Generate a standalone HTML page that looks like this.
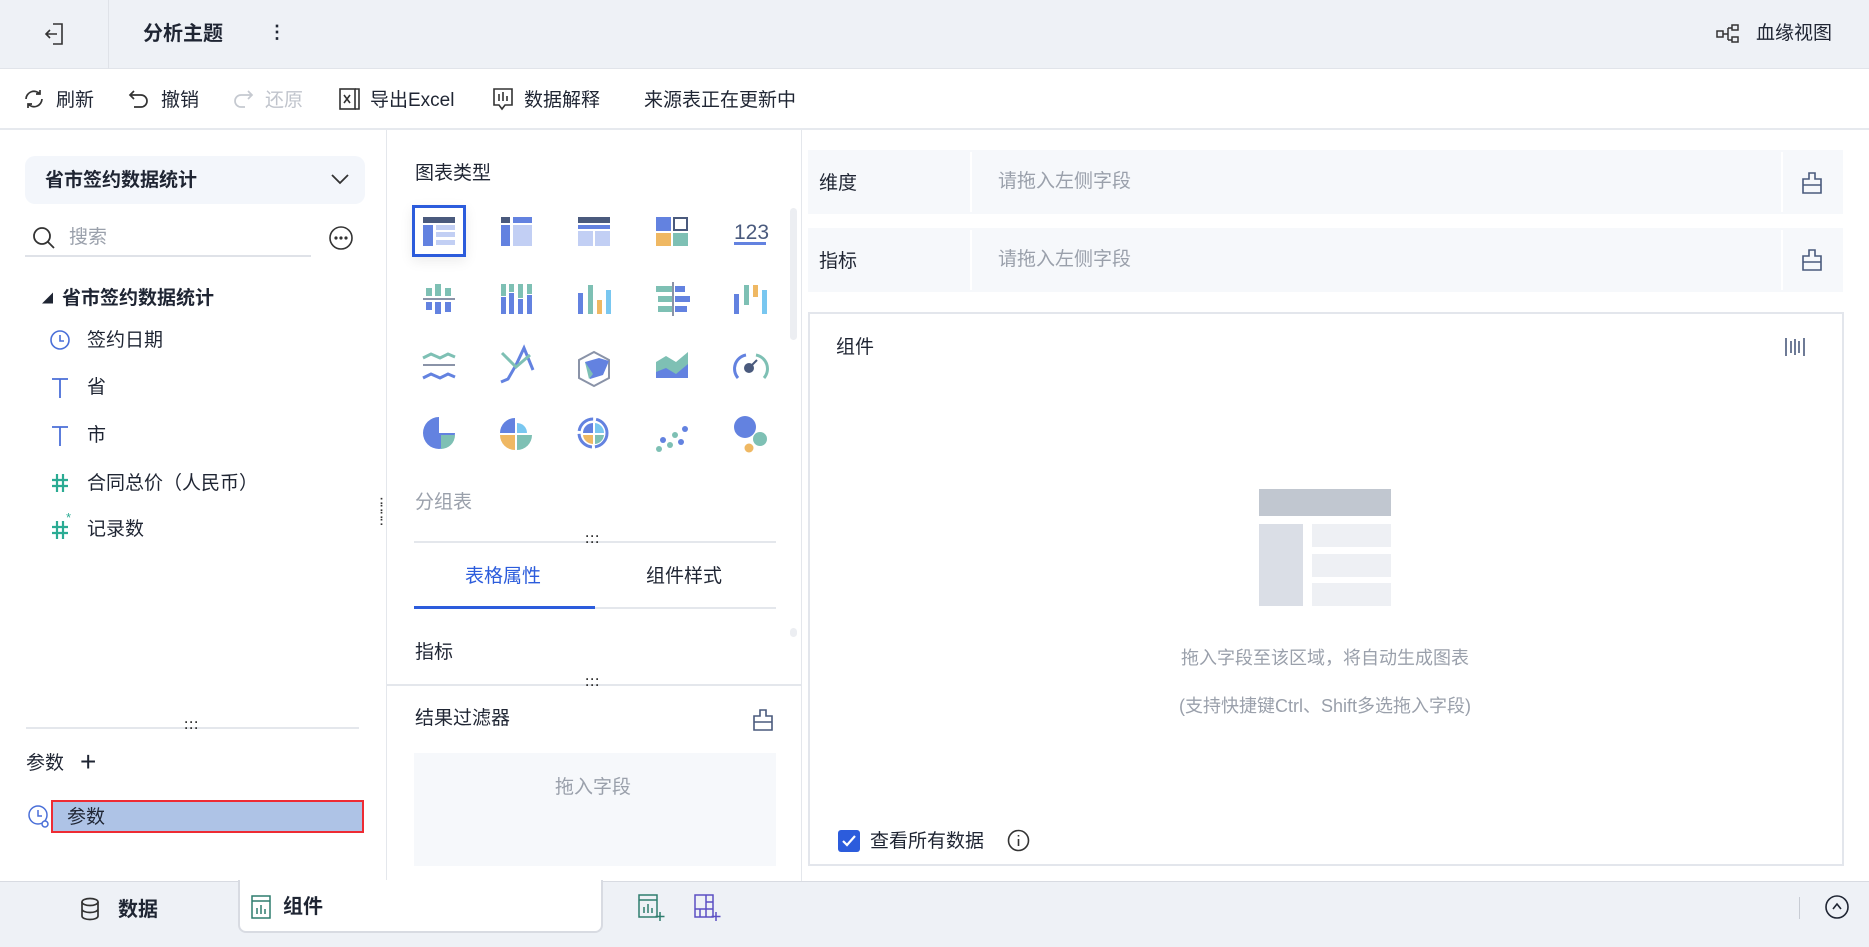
<!DOCTYPE html>
<html><head><meta charset="utf-8">
<style>
*{box-sizing:border-box;margin:0;padding:0}
body{width:1869px;height:947px;overflow:hidden;background:#fff;font-family:"Liberation Sans","Noto Sans CJK SC",sans-serif;color:#1f2533;position:relative}
.a{position:absolute;white-space:nowrap}
.t{font-size:19px;line-height:24px}
svg{position:absolute;overflow:visible}
.dots{position:absolute;width:20px;font-size:12px;line-height:6px;color:#333;text-align:center;letter-spacing:1px;font-weight:bold}
</style></head><body>
<!-- top bar -->
<div class="a" style="left:0;top:0;width:1869px;height:69px;background:#eef1f6;border-bottom:1px solid #e1e4ea"></div>
<div class="a" style="left:108px;top:0;width:1px;height:69px;background:#dfe2e8"></div>
<svg style="left:44px;top:22px" width="22" height="24" viewBox="0 0 22 24" fill="none" stroke="#333" stroke-width="1.6"><path d="M9 2h9v20H9M13 12H2M6 8l-4 4 4 4"/></svg>
<div class="a" style="left:143px;top:21px;font-size:20px;font-weight:bold;line-height:26px">分析主题</div>
<div class="a" style="left:268px;top:22px;font-size:18px;font-weight:bold">⋮</div>
<svg style="left:1716px;top:24px" width="24" height="20" viewBox="0 0 24 20" fill="none" stroke="#333" stroke-width="1.5"><rect x="1" y="7" width="6" height="6"/><rect x="16" y="1" width="6" height="5"/><rect x="16" y="13" width="6" height="5"/><path d="M7 10h5M12 4v12M12 4h4M12 16h4"/></svg>
<div class="a t" style="left:1756px;top:22px">血缘视图</div>
<!-- toolbar -->
<div class="a" style="left:0;top:128px;width:1869px;height:2px;background:#e6e9ee"></div>
<svg style="left:23px;top:88px" width="22" height="22" viewBox="0 0 22 22" fill="none" stroke="#333" stroke-width="1.7"><path d="M3 11a8 8 0 0 1 14-5M19 11a8 8 0 0 1-14 5M17 2v4h-4M5 20v-4h4"/></svg>
<div class="a t" style="left:56px;top:89px">刷新</div>
<svg style="left:128px;top:88px" width="22" height="22" viewBox="0 0 22 22" fill="none" stroke="#333" stroke-width="1.7"><path d="M6 3L2 7l4 4M2 7h11a6 6 0 0 1 0 12H6"/></svg>
<div class="a t" style="left:161px;top:89px">撤销</div>
<svg style="left:232px;top:88px" width="22" height="22" viewBox="0 0 22 22" fill="none" stroke="#c5c9d0" stroke-width="1.7"><path d="M16 3l4 4-4 4M20 7H9a6 6 0 0 0 0 12h4"/></svg>
<div class="a t" style="left:265px;top:89px;color:#c0c4cc">还原</div>
<svg style="left:339px;top:87px" width="22" height="24" viewBox="0 0 22 24" fill="none" stroke="#333" stroke-width="1.6"><rect x="1" y="2" width="15" height="20"/><path d="M16 2h4v20h-4M5 8l6 8M11 8l-6 8"/></svg>
<div class="a t" style="left:370px;top:89px">导出Excel</div>
<svg style="left:492px;top:87px" width="22" height="24" viewBox="0 0 22 24" fill="none" stroke="#333" stroke-width="1.6"><path d="M2 2h18v16h-7l-3 4-3-4H2z M7 7v7M11 5v9M15 9v5"/></svg>
<div class="a t" style="left:524px;top:89px">数据解释</div>
<div class="a t" style="left:644px;top:89px">来源表正在更新中</div>
<!-- left panel -->
<div class="a" style="left:386px;top:130px;width:1px;height:752px;background:#e4e7ec"></div>
<div class="a" style="left:25px;top:156px;width:340px;height:48px;background:#f3f6fb;border-radius:10px"></div>
<div class="a" style="left:45px;top:169px;font-size:19px;font-weight:bold;line-height:24px">省市签约数据统计</div>
<svg style="left:331px;top:174px" width="18" height="10" viewBox="0 0 18 10" fill="none" stroke="#333" stroke-width="1.8"><path d="M1 1l8 8 8-8"/></svg>
<svg style="left:32px;top:226px" width="24" height="24" viewBox="0 0 24 24" fill="none" stroke="#333" stroke-width="1.8"><circle cx="10" cy="10" r="8"/><path d="M16 16l6 6"/></svg>
<div class="a t" style="left:69px;top:226px;color:#9aa0ab">搜索</div>
<div class="a" style="left:25px;top:255px;width:286px;height:2px;background:#dfe2e8"></div>
<svg style="left:329px;top:226px" width="24" height="24" viewBox="0 0 24 24" fill="none" stroke="#333" stroke-width="1.6"><circle cx="12" cy="12" r="11"/><circle cx="7" cy="12" r=".8" fill="#333"/><circle cx="12" cy="12" r=".8" fill="#333"/><circle cx="17" cy="12" r=".8" fill="#333"/></svg>
<div class="a" style="left:42px;top:290px;font-size:11px">◢</div>
<div class="a" style="left:62px;top:287px;font-size:19px;font-weight:bold;line-height:24px">省市签约数据统计</div>
<svg style="left:50px;top:330px" width="20" height="20" viewBox="0 0 20 20" fill="none" stroke="#4a6fd8" stroke-width="1.6"><circle cx="10" cy="10" r="9"/><path d="M10 5v6h4"/></svg>
<div class="a t" style="left:87px;top:329px">签约日期</div>
<svg style="left:51px;top:378px" width="18" height="20" viewBox="0 0 18 20" fill="none" stroke="#4a6fd8" stroke-width="1.8"><path d="M1 1h16M9 1v19"/></svg>
<div class="a t" style="left:87px;top:376px">省</div>
<svg style="left:51px;top:426px" width="18" height="20" viewBox="0 0 18 20" fill="none" stroke="#4a6fd8" stroke-width="1.8"><path d="M1 1h16M9 1v19"/></svg>
<div class="a t" style="left:87px;top:424px">市</div>
<svg style="left:51px;top:473px" width="18" height="20" viewBox="0 0 18 20" fill="none" stroke="#2bab93" stroke-width="2.2"><path d="M6 1v18M12 1v18M1 7h16M1 13h16"/></svg>
<div class="a t" style="left:87px;top:472px">合同总价（人民币）</div>
<svg style="left:51px;top:520px" width="18" height="20" viewBox="0 0 18 20" fill="none" stroke="#2bab93" stroke-width="2.2"><path d="M6 1v18M12 1v18M1 7h16M1 13h16"/></svg>
<div class="a" style="left:66px;top:510px;font-size:13px;color:#2bab93">*</div>
<div class="a t" style="left:87px;top:518px">记录数</div>
<div class="a" style="left:26px;top:727px;width:333px;height:2px;background:#e4e7ec"></div>
<div class="dots" style="left:182px;top:719px">···<br>···</div>
<div class="a t" style="left:26px;top:752px">参数</div>
<div class="a" style="left:80px;top:746px;font-size:28px;font-weight:300;line-height:32px">+</div>
<svg style="left:28px;top:805px" width="22" height="24" viewBox="0 0 22 24" fill="none" stroke="#4a6fd8" stroke-width="1.5"><circle cx="10" cy="10" r="9"/><path d="M10 5v6h4"/><circle cx="17" cy="19" r="3" fill="#fff"/></svg>
<div class="a" style="left:51px;top:800px;width:313px;height:33px;border:2px solid #ee2b33;background:#aec3e6"></div>
<div class="a t" style="left:67px;top:806px">参数</div>
<!-- middle panel -->
<div class="a" style="left:801px;top:130px;width:1px;height:752px;background:#e4e7ec"></div>
<div class="a t" style="left:415px;top:162px">图表类型</div>
<div class="a" style="left:412px;top:205px;width:54px;height:52px;border:3px solid #2c5cdc;box-shadow:0 4px 12px rgba(0,0,0,.08)"></div>
<svg style="left:390px;top:190px" width="420" height="280" viewBox="390 190 420 280">
<g>
<rect x="423" y="217" width="32" height="6" fill="#4a5a7d"/><rect x="423" y="225" width="10" height="21" fill="#6382e0"/><rect x="436" y="225" width="19" height="5" fill="#c2cff4"/><rect x="436" y="232" width="19" height="5" fill="#c2cff4"/><rect x="436" y="240" width="19" height="5" fill="#c2cff4"/>
<rect x="501" y="217" width="9" height="6" fill="#4a5a7d"/><rect x="513" y="217" width="19" height="6" fill="#6382e0"/><rect x="501" y="225" width="9" height="21" fill="#6382e0"/><rect x="513" y="225" width="19" height="21" fill="#c2cff4"/>
<rect x="578" y="217" width="32" height="6" fill="#4a5a7d"/><rect x="578" y="225" width="32" height="4" fill="#6382e0"/><rect x="578" y="231" width="15" height="15" fill="#c2cff4"/><rect x="595" y="231" width="15" height="15" fill="#c2cff4"/>
<rect x="656" y="217" width="15" height="14" fill="#6382e0"/><rect x="674" y="218" width="13" height="12" fill="none" stroke="#4a5a7d" stroke-width="2"/><rect x="656" y="233" width="15" height="13" fill="#efb863"/><rect x="673" y="233" width="15" height="13" fill="#7ec0b4"/>
<text x="734" y="239" font-size="21" fill="#4a5a7d" font-family="Liberation Sans">123</text><rect x="734" y="242" width="32" height="3" fill="#6382e0"/>
</g>
<g>
<rect x="426" y="288" width="6" height="8" fill="#7ec0b4"/><rect x="435" y="284" width="6" height="12" fill="#7ec0b4"/><rect x="445" y="288" width="6" height="8" fill="#7ec0b4"/><rect x="423" y="298" width="32" height="2" fill="#8a93a8"/><rect x="426" y="302" width="6" height="8" fill="#6382e0"/><rect x="435" y="302" width="6" height="12" fill="#6382e0"/><rect x="445" y="302" width="6" height="10" fill="#6382e0"/>
<rect x="501" y="284" width="5" height="12" fill="#7ec0b4"/><rect x="501" y="297" width="5" height="17" fill="#6382e0"/><rect x="509" y="284" width="5" height="8" fill="#7ec0b4"/><rect x="509" y="293" width="5" height="21" fill="#6382e0"/><rect x="518" y="284" width="5" height="14" fill="#7ec0b4"/><rect x="518" y="299" width="5" height="15" fill="#6382e0"/><rect x="527" y="284" width="5" height="10" fill="#7ec0b4"/><rect x="527" y="295" width="5" height="19" fill="#6382e0"/>
<rect x="578" y="293" width="5" height="21" fill="#6382e0"/><rect x="588" y="285" width="5" height="29" fill="#7ec0b4"/><rect x="597" y="300" width="5" height="14" fill="#efb863"/><rect x="606" y="290" width="5" height="24" fill="#79c7f0"/>
<rect x="656" y="286" width="16" height="6" fill="#7ec0b4"/><rect x="675" y="286" width="10" height="6" fill="#6382e0"/><rect x="658" y="296" width="14" height="6" fill="#7ec0b4"/><rect x="675" y="296" width="15" height="6" fill="#6382e0"/><rect x="658" y="306" width="14" height="6" fill="#7ec0b4"/><rect x="675" y="306" width="12" height="6" fill="#6382e0"/><rect x="672" y="282" width="2" height="34" fill="#8a93a8"/>
<rect x="734" y="294" width="5" height="20" fill="#6382e0"/><rect x="744" y="285" width="5" height="20" fill="#7ec0b4"/><rect x="753" y="285" width="5" height="12" fill="#efb863"/><rect x="762" y="290" width="5" height="24" fill="#79c7f0"/>
</g>
<g fill="none" stroke-width="3">
<path d="M423 358l8-4 9 4 8-4 7 3" stroke="#7ec0b4"/><path d="M423 365h32" stroke="#8a93a8" stroke-width="2"/><path d="M423 378l8-4 9 4 8-4 7 3" stroke="#6382e0"/>
<path d="M501 382l7-3 8-14 8-17 9 22" stroke="#6382e0"/><path d="M502 353l14 14 14-12" stroke="#7ec0b4"/>
<path d="M594 352l15 8v18l-15 8-15-8v-18z" stroke="#8a93a8" stroke-width="2"/><path d="M585 362l14-4 10 3-6 14-13 4z" fill="#6382e0" stroke="none"/><path d="M585 362l8 12-4 5z" fill="#7ec0b4" stroke="none"/>
<path d="M656 362l10-6 10 6 12-10v26h-32z" fill="#7ec0b4" stroke="none"/><path d="M656 372l10-4 10 6 12-10v14h-32z" fill="#6382e0" stroke="none"/>
<path d="M738 378a14 14 0 0 1 8-23" stroke="#6382e0"/><path d="M756 355a14 14 0 0 1 8 23" stroke="#7ec0b4"/><circle cx="749" cy="368" r="5" fill="#4a5a7d" stroke="none"/><path d="M749 368l8-8" stroke="#4a5a7d" stroke-width="2"/>
</g>
<g transform="translate(0,-7)">
<path d="M455 440a16 16 0 1 1-16-16v16z" fill="#6382e0"/><path d="M441 442h14a14 14 0 0 1-14 14z" fill="#7ec0b4"/>
<path d="M515 425a15 15 0 0 0-15 15h15z" fill="#6382e0"/><path d="M517 430v10h10a10 10 0 0 0-10-10z" fill="#79c7f0"/><path d="M500 442a15 15 0 0 0 15 15v-15z" fill="#efb863"/><path d="M517 442v15a15 15 0 0 0 15-15z" fill="#7ec0b4"/>
<circle cx="593" cy="440" r="14" fill="none" stroke="#6382e0" stroke-width="3" stroke-dasharray="20 3"/><path d="M593 430a10 10 0 0 0-10 10h10z" fill="#6382e0"/><path d="M595 430v10h9a10 10 0 0 0-9-10z" fill="#79c7f0"/><path d="M583 442a10 10 0 0 0 10 9v-9z" fill="#efb863"/><path d="M595 442v9a10 10 0 0 0 9-9z" fill="#7ec0b4"/>
<circle cx="663" cy="447" r="3" fill="#6382e0"/><circle cx="675" cy="442" r="3" fill="#7ec0b4"/><circle cx="685" cy="436" r="3" fill="#6382e0"/><circle cx="659" cy="456" r="3" fill="#7ec0b4"/><circle cx="670" cy="452" r="3" fill="#7ec0b4"/><circle cx="681" cy="449" r="3" fill="#6382e0"/>
<circle cx="745" cy="434" r="11" fill="#6382e0"/><circle cx="760" cy="446" r="7" fill="#7ec0b4"/><circle cx="749" cy="455" r="4.5" fill="#efb863"/>
</g>
</svg>
<div class="a" style="left:790px;top:208px;width:7px;height:132px;background:#eceef2;border-radius:4px"></div>
<div class="a" style="left:790px;top:628px;width:7px;height:9px;background:#eceef2;border-radius:4px"></div>
<div class="dots" style="left:376px;top:497px;width:12px;line-height:7px;font-size:12px">: :<br>: :</div>
<div class="a t" style="left:415px;top:491px;color:#9aa0ab">分组表</div>
<div class="a" style="left:414px;top:541px;width:362px;height:2px;background:#e4e7ec"></div>
<div class="dots" style="left:583px;top:533px">···<br>···</div>
<div class="a t" style="left:465px;top:565px;color:#2c5cdc">表格属性</div>
<div class="a t" style="left:646px;top:565px">组件样式</div>
<div class="a" style="left:414px;top:607px;width:362px;height:2px;background:#e4e7ec"></div>
<div class="a" style="left:414px;top:606px;width:181px;height:3px;background:#2c5cdc"></div>
<div class="a t" style="left:415px;top:641px">指标</div>
<div class="a" style="left:387px;top:684px;width:414px;height:2px;background:#e4e7ec"></div>
<div class="dots" style="left:583px;top:676px">···<br>···</div>
<div class="a t" style="left:415px;top:707px">结果过滤器</div>
<svg style="left:753px;top:709px" width="20" height="22" viewBox="0 0 20 22" fill="none" stroke="#4a5a7d" stroke-width="1.6"><path d="M7 1h6v6h6v14H1V7h6zM1 13h18"/></svg>
<div class="a" style="left:414px;top:753px;width:362px;height:113px;background:#f6f8fb"></div>
<div class="a t" style="left:555px;top:776px;color:#9aa0ab">拖入字段</div>
<!-- right -->
<div class="a" style="left:808px;top:150px;width:1035px;height:64px;background:#f6f8fb"></div>
<div class="a" style="left:970px;top:152px;width:2px;height:60px;background:#fff"></div>
<div class="a" style="left:1781px;top:152px;width:2px;height:60px;background:#fff"></div>
<div class="a t" style="left:819px;top:172px">维度</div>
<div class="a t" style="left:998px;top:170px;color:#9aa0ab">请拖入左侧字段</div>
<svg style="left:1802px;top:172px" width="20" height="22" viewBox="0 0 20 22" fill="none" stroke="#4a5a7d" stroke-width="1.6"><path d="M7 1h6v6h6v14H1V7h6zM1 13h18"/></svg>
<div class="a" style="left:808px;top:228px;width:1035px;height:64px;background:#f6f8fb"></div>
<div class="a" style="left:970px;top:230px;width:2px;height:60px;background:#fff"></div>
<div class="a" style="left:1781px;top:230px;width:2px;height:60px;background:#fff"></div>
<div class="a t" style="left:819px;top:250px">指标</div>
<div class="a t" style="left:998px;top:248px;color:#9aa0ab">请拖入左侧字段</div>
<svg style="left:1802px;top:249px" width="20" height="22" viewBox="0 0 20 22" fill="none" stroke="#4a5a7d" stroke-width="1.6"><path d="M7 1h6v6h6v14H1V7h6zM1 13h18"/></svg>
<div class="a" style="left:808px;top:312px;width:1036px;height:554px;border:2px solid #e3e6ec"></div>
<div class="a t" style="left:836px;top:336px">组件</div>
<svg style="left:1784px;top:336px" width="22" height="22" viewBox="0 0 22 22" fill="none" stroke="#4a5a7d" stroke-width="1.6"><path d="M2 2v18M20 2v18M7 5v12M11 3v16M15 5v12"/></svg>
<div class="a" style="left:1259px;top:489px;width:132px;height:27px;background:#c1c7d0"></div>
<div class="a" style="left:1259px;top:524px;width:44px;height:82px;background:#dadee6"></div>
<div class="a" style="left:1312px;top:524px;width:79px;height:23px;background:#eef0f4"></div>
<div class="a" style="left:1312px;top:554px;width:79px;height:23px;background:#eef0f4"></div>
<div class="a" style="left:1312px;top:583px;width:79px;height:23px;background:#eef0f4"></div>
<div class="a" style="left:1125px;top:646px;width:400px;text-align:center;font-size:18px;line-height:24px;color:#9aa0ab">拖入字段至该区域，将自动生成图表</div>
<div class="a" style="left:1075px;top:694px;width:500px;text-align:center;font-size:18px;line-height:24px;color:#9aa0ab">(支持快捷键Ctrl、Shift多选拖入字段)</div>
<div class="a" style="left:838px;top:830px;width:22px;height:22px;background:#2c5cdc;border-radius:3px"></div>
<svg style="left:842px;top:835px" width="14" height="12" viewBox="0 0 14 12" fill="none" stroke="#fff" stroke-width="2.2"><path d="M1 6l4 4 8-9"/></svg>
<div class="a t" style="left:870px;top:830px">查看所有数据</div>
<svg style="left:1007px;top:829px" width="23" height="23" viewBox="0 0 23 23" fill="none" stroke="#333" stroke-width="1.6"><circle cx="11.5" cy="11.5" r="10"/><path d="M11.5 10v7M11.5 6v1.5"/></svg>
<!-- bottom bar -->
<div class="a" style="left:0;top:881px;width:1869px;height:66px;background:#eef1f6;border-top:1px solid #d8dbe2"></div>
<svg style="left:80px;top:897px" width="20" height="24" viewBox="0 0 20 24" fill="none" stroke="#333" stroke-width="1.7"><ellipse cx="10" cy="5" rx="8" ry="3.5"/><path d="M2 5v14c0 2 3.5 3.5 8 3.5s8-1.5 8-3.5V5M2 12c0 2 3.5 3.5 8 3.5s8-1.5 8-3.5"/></svg>
<div class="a" style="left:118px;top:897px;font-size:20px;font-weight:bold;line-height:26px">数据</div>
<div class="a" style="left:238px;top:880px;width:365px;height:53px;background:#fff;border:2px solid #d8dbe2;border-top:none;border-radius:0 0 8px 8px"></div>
<svg style="left:251px;top:895px" width="20" height="24" viewBox="0 0 20 24" fill="none" stroke="#2e7d6e" stroke-width="1.5"><rect x="1" y="1" width="18" height="22"/><path d="M1 6h18M6 19v-6M10 19v-9M14 19v-5"/></svg>
<div class="a" style="left:283px;top:894px;font-size:20px;font-weight:bold;line-height:26px">组件</div>
<svg style="left:638px;top:894px" width="26" height="28" viewBox="0 0 26 28" fill="none" stroke="#2e7d6e" stroke-width="1.5"><rect x="1" y="1" width="18" height="22"/><path d="M1 6h18M6 19v-6M10 19v-9M14 19v-5M22 18v9M17.5 22.5h9"/></svg>
<svg style="left:694px;top:894px" width="26" height="28" viewBox="0 0 26 28" fill="none" stroke="#5b4fc4" stroke-width="1.5"><rect x="1" y="1" width="18" height="22"/><path d="M12 1v22M12 8h7M12 15h7M1 15h11M6 15v8M22 18v9M17.5 22.5h9"/></svg>
<div class="a" style="left:1799px;top:897px;width:1px;height:22px;background:#c8ccd4"></div>
<svg style="left:1825px;top:895px" width="24" height="24" viewBox="0 0 24 24" fill="none" stroke="#1f2533" stroke-width="1.6"><circle cx="12" cy="12" r="11"/><path d="M8 14l4-5 4 5"/></svg>
</body></html>
